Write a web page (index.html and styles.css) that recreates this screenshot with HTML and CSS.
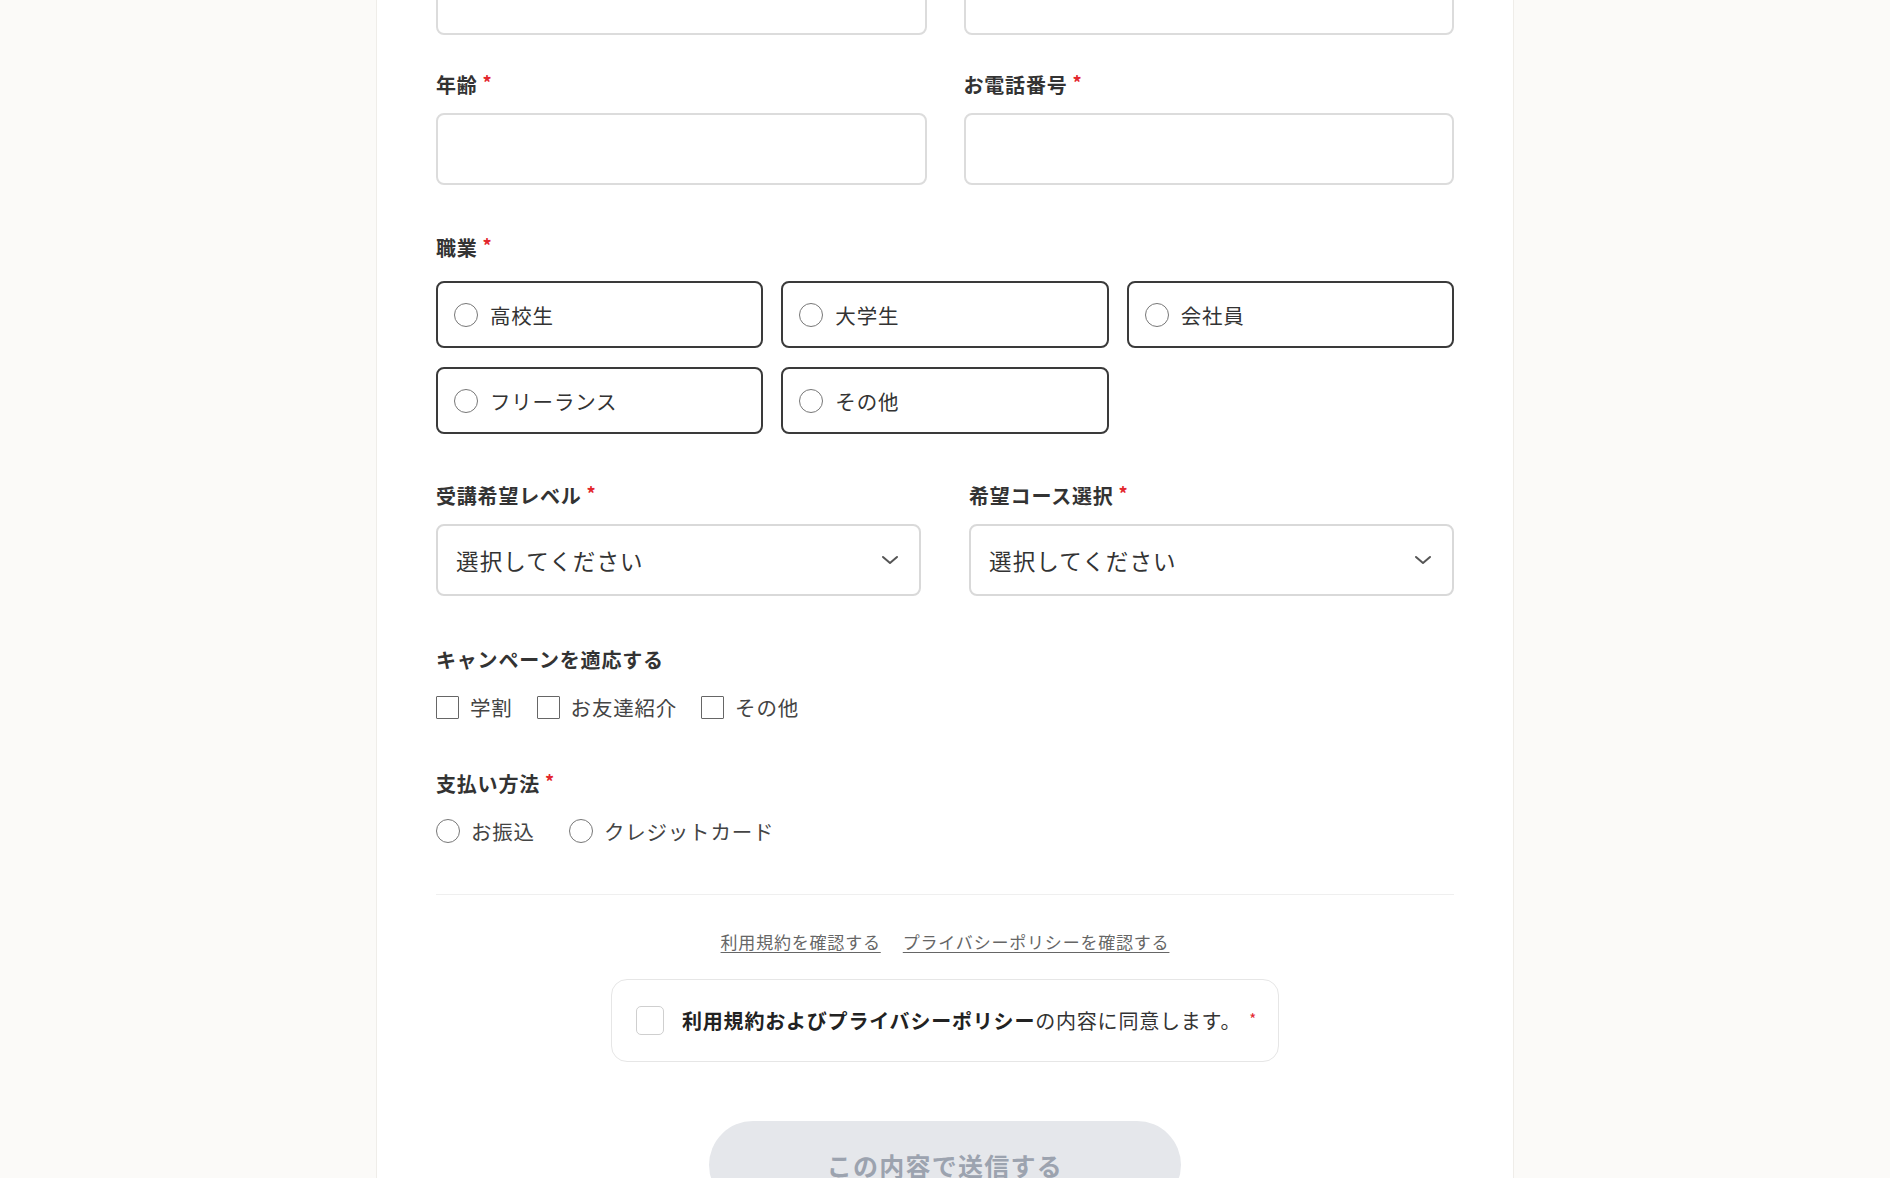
FILE: index.html
```html
<!DOCTYPE html>
<html lang="ja">
<head>
<meta charset="utf-8">
<title>お申し込みフォーム</title>
<link rel="stylesheet" href="styles.css">
</head>
<body>
<main class="card">
  <form class="form">
    <div class="row two">
      <div class="input"></div>
      <div class="input"></div>
    </div>

    <div class="row two sec-a">
      <div class="field">
        <label class="label">年齢<span class="req">*</span></label>
        <div class="input"></div>
      </div>
      <div class="field">
        <label class="label">お電話番号<span class="req">*</span></label>
        <div class="input"></div>
      </div>
    </div>

    <div class="field sec-b">
      <label class="label">職業<span class="req">*</span></label>
      <div class="choice-grid">
        <div class="choice"><span class="radio"></span><span>高校生</span></div>
        <div class="choice"><span class="radio"></span><span>大学生</span></div>
        <div class="choice"><span class="radio"></span><span>会社員</span></div>
        <div class="choice"><span class="radio"></span><span>フリーランス</span></div>
        <div class="choice"><span class="radio"></span><span>その他</span></div>
      </div>
    </div>

    <div class="row selects sec-c">
      <div class="field">
        <label class="label">受講希望レベル<span class="req">*</span></label>
        <div class="select"><span>選択してください</span>
          <svg class="chev" width="18" height="10" viewBox="0 0 18 10"><path d="M2 2 L9 8 L16 2" fill="none" stroke="#555" stroke-width="2" stroke-linecap="round" stroke-linejoin="round"/></svg>
        </div>
      </div>
      <div class="field">
        <label class="label">希望コース選択<span class="req">*</span></label>
        <div class="select"><span>選択してください</span>
          <svg class="chev" width="18" height="10" viewBox="0 0 18 10"><path d="M2 2 L9 8 L16 2" fill="none" stroke="#555" stroke-width="2" stroke-linecap="round" stroke-linejoin="round"/></svg>
        </div>
      </div>
    </div>

    <div class="field sec-d">
      <label class="label">キャンペーンを適応する</label>
      <div class="inline-opts checks">
        <span class="opt"><span class="box"></span>学割</span>
        <span class="opt"><span class="box"></span>お友達紹介</span>
        <span class="opt"><span class="box"></span>その他</span>
      </div>
    </div>

    <div class="field sec-e">
      <label class="label">支払い方法<span class="req">*</span></label>
      <div class="inline-opts radios">
        <span class="opt"><span class="radio"></span>お振込</span>
        <span class="opt"><span class="radio"></span>クレジットカード</span>
      </div>
    </div>

    <hr class="divider">

    <div class="links">
      <a href="#">利用規約を確認する</a>
      <a href="#">プライバシーポリシーを確認する</a>
    </div>

    <div class="agree-wrap">
      <div class="agree">
        <span class="agree-box"></span>
        <span class="agree-text"><strong>利用規約およびプライバシーポリシー</strong>の内容に同意します。</span>
        <span class="agree-req">*</span>
      </div>
    </div>

    <div class="submit-wrap">
      <button type="button" class="submit">この内容で送信する</button>
    </div>
  </form>
</main>
</body>
</html>
```

FILE: styles.css
```css
* { box-sizing: border-box; }

html, body {
  margin: 0;
  padding: 0;
  background: #fbfaf8;
  font-family: "Noto Sans CJK JP", "Noto Sans", sans-serif;
  color: #333;
  letter-spacing: 0.05em;
}

.card {
  width: 1138px;
  margin: -77px auto 0;
  background: #ffffff;
  border-left: 1px solid #efede9;
  border-right: 1px solid #efede9;
  padding: 40px 59px 80px;
}

.form {
  display: flex;
  flex-direction: column;
}

.row.two {
  display: grid;
  grid-template-columns: 1fr 1fr;
  column-gap: 37px;
}

.row.selects {
  display: grid;
  grid-template-columns: 1fr 1fr;
  column-gap: 48px;
}

.field {
  display: flex;
  flex-direction: column;
}

.label {
  font-size: 20px;
  line-height: 28px;
  font-weight: 700;
  color: #333;
  margin-bottom: 14px;
  display: flex;
  align-items: flex-start;
}

.req {
  color: #e3262d;
  font-size: 18px;
  line-height: 22px;
  margin-left: 5px;
}

.input {
  height: 72px;
  border: 2px solid #dcdcdc;
  border-radius: 8px;
  background: #fff;
}

.sec-a { margin-top: 36px; }
.sec-b { margin-top: 49px; }
.sec-c { margin-top: 48px; }
.sec-d { margin-top: 50px; }
.sec-e { margin-top: 49px; }

.sec-b .label,
.sec-d .label,
.sec-e .label { margin-bottom: 19px; }

.choice-grid {
  display: grid;
  grid-template-columns: repeat(3, 1fr);
  gap: 19px 18px;
}

.choice {
  height: 67px;
  border: 2px solid #3a3a3a;
  border-radius: 8px;
  display: flex;
  align-items: center;
  padding-left: 16px;
  gap: 12px;
  font-size: 20.5px;
  color: #333;
}

.radio {
  width: 24px;
  height: 24px;
  border: 1.5px solid #777;
  border-radius: 50%;
  flex: none;
  background: #fff;
}

.select {
  height: 72px;
  border: 2px solid #d9d9d9;
  border-radius: 8px;
  display: flex;
  align-items: center;
  justify-content: space-between;
  padding: 0 20px 0 18px;
  font-size: 22.5px;
  letter-spacing: 0.05em;
  color: #333;
}

.chev { flex: none; }

.inline-opts {
  display: flex;
  align-items: center;
  height: 28px;
  font-size: 20.5px;
  color: #444;
}

.checks { gap: 24px; }
.radios { gap: 34px; }

.opt {
  display: inline-flex;
  align-items: center;
  gap: 11px;
}

.box {
  width: 23px;
  height: 23px;
  border: 1.5px solid #666;
  border-radius: 1px;
  flex: none;
}

.divider {
  margin: 49px 0 0;
  border: 0;
  border-top: 1px solid #efefef;
  height: 0;
}

.links {
  margin-top: 34px;
  display: flex;
  justify-content: center;
  gap: 22px;
  font-size: 17px;
  line-height: 26px;
}

.links a {
  color: #666;
  text-decoration: underline;
  text-underline-offset: 3px;
}

.agree-wrap {
  margin-top: 24px;
  display: flex;
  justify-content: center;
}

.agree {
  height: 83px;
  border: 1px solid #e6e6e6;
  border-radius: 16px;
  display: flex;
  align-items: center;
  padding: 0 21px 0 24px;
  background: #fff;
}

.agree-box {
  width: 28px;
  height: 29px;
  border: 1.5px solid #cfcfcf;
  border-radius: 5px;
  flex: none;
  margin-right: 18px;
}

.agree-text {
  font-size: 20px;
  color: #333;
}

.agree-text strong {
  font-weight: 700;
  color: #222;
}

.agree-req {
  color: #e3262d;
  font-size: 15px;
  margin-left: 8px;
  align-self: flex-start;
  margin-top: 28px;
}

.submit-wrap {
  margin-top: 59px;
  display: flex;
  justify-content: center;
}

.submit {
  width: 472px;
  height: 88px;
  border: 0;
  border-radius: 44px;
  background: #e5e7eb;
  color: #9ca3af;
  font-family: inherit;
  font-size: 25px;
  font-weight: 700;
  letter-spacing: 0.05em;
}
```
